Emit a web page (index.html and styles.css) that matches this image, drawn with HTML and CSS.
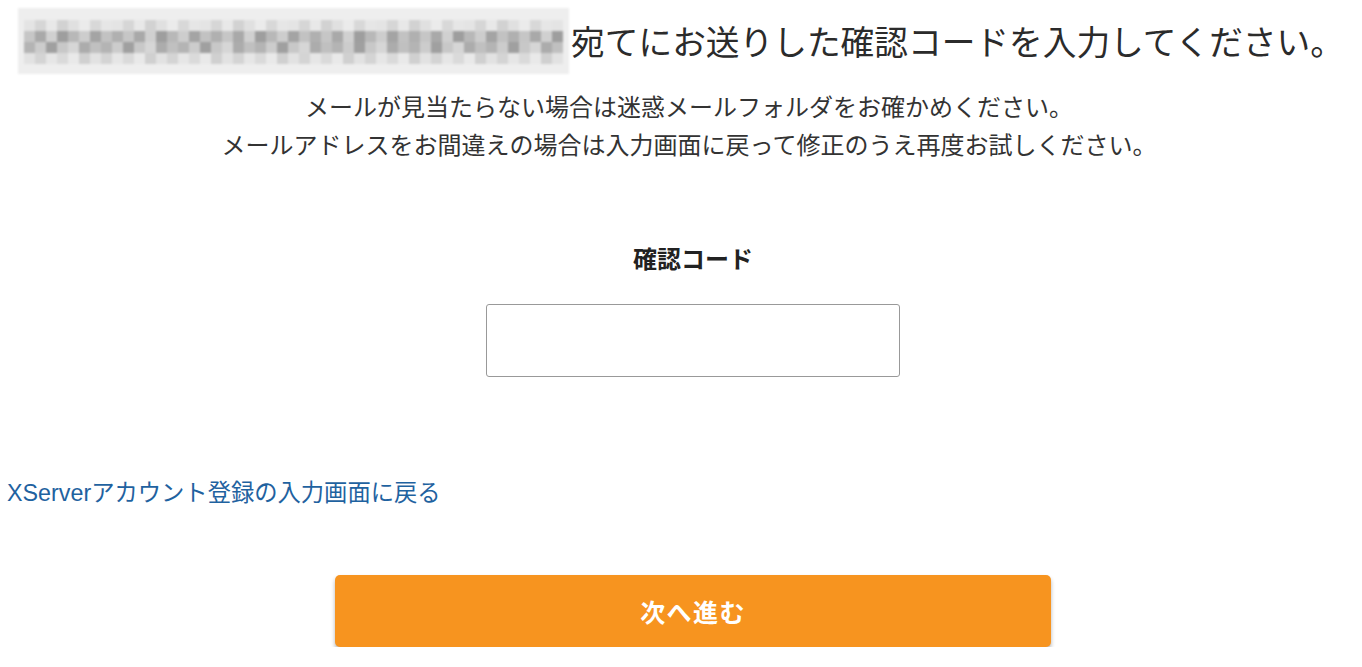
FILE: index.html
```html
<!DOCTYPE html>
<html lang="ja">
<head>
<meta charset="utf-8">
<title>確認コード入力</title>
<link rel="stylesheet" href="styles.css">
</head>
<body>
<main class="page">
  <header class="intro">
    <h1 class="title">
      <span class="email-mask" aria-hidden="true">
        <span class="mosaic-row row-a"></span>
        <span class="mosaic-row row-b"></span>
        <span class="mosaic-row row-c"></span>
        <span class="mosaic-row row-d"></span>
      </span>
      <span class="title-text">宛てにお送りした確認コードを入力してください。</span>
    </h1>
    <p class="note">メールが見当たらない場合は迷惑メールフォルダをお確かめください。<br>メールアドレスをお間違えの場合は入力画面に戻って修正のうえ再度お試しください。</p>
  </header>

  <section class="form">
    <label class="field-label" for="code">確認コード</label>
    <input class="field-input" id="code" type="text">
  </section>

  <nav class="back">
    <a class="back-link" href="#">XServerアカウント登録の入力画面に戻る</a>
  </nav>

  <div class="actions">
    <button class="btn-next" type="button">次へ進む</button>
  </div>
</main>
</body>
</html>
```

FILE: styles.css
```css
html, body {
  margin: 0;
  padding: 0;
  background: #fff;
}

body {
  font-family: "Noto Sans CJK JP", "Noto Sans", sans-serif;
  color: #333;
}

.page {
  display: flex;
  flex-direction: column;
}

.intro {
  padding-top: 8px;
  text-align: center;
}

.title {
  margin: 0;
  display: flex;
  justify-content: center;
  align-items: center;
  font-size: 33.7px;
  font-weight: 400;
  line-height: 1;
  color: #2b2b2b;
}

.email-mask {
  display: flex;
  flex-direction: column;
  box-sizing: border-box;
  width: 551px;
  height: 66px;
  padding: 12px 6px 0;
  background: #eeeeee;
  filter: blur(0.8px);
}

.mosaic-row {
  display: block;
  height: 11px;
}

.row-a {
  background: repeating-linear-gradient(90deg,
    #e4e4e4 0 11px, #d6d6d6 11px 22px, #e8e8e8 22px 33px, #d2d2d2 33px 44px,
    #e0e0e0 44px 55px, #ebebeb 55px 66px, #d8d8d8 66px 77px, #e6e6e6 77px 88px);
}

.row-b {
  background: repeating-linear-gradient(90deg,
    #c6c6c6 0 11px, #a9a9a9 11px 22px, #d0d0d0 22px 33px, #9e9e9e 33px 44px,
    #b8b8b8 44px 55px, #cdcdcd 55px 66px, #a4a4a4 66px 77px, #c2c2c2 77px 88px,
    #b0b0b0 88px 99px);
}

.row-c {
  background: repeating-linear-gradient(90deg,
    #b4b4b4 0 11px, #cccccc 11px 22px, #a0a0a0 22px 33px, #c8c8c8 33px 44px,
    #d6d6d6 44px 55px, #acacac 55px 66px, #c0c0c0 66px 77px);
}

.row-d {
  background: repeating-linear-gradient(90deg,
    #e2e2e2 0 11px, #d4d4d4 11px 22px, #e6e6e6 22px 33px, #dadada 33px 44px,
    #e9e9e9 44px 55px, #d0d0d0 55px 66px);
}

.title-text {
  margin-left: 2px;
}

.note {
  margin: 13px 0 0;
  font-size: 24px;
  line-height: 38px;
  color: #333;
  padding-left: 16px;
}

.form {
  display: flex;
  flex-direction: column;
  align-items: center;
  padding-left: 24px;
  margin-top: 78px;
}

.field-label {
  font-size: 24px;
  font-weight: 700;
  line-height: 34px;
  color: #222;
}

.field-input {
  margin-top: 29px;
  box-sizing: border-box;
  width: 414px;
  height: 73px;
  border: 1px solid #999;
  border-radius: 3px;
  background: #fff;
  font-size: 22px;
  padding: 0 12px;
}

.back {
  margin-top: 99px;
  padding-left: 7px;
}

.back-link {
  font-family: "Liberation Sans", "Noto Sans CJK JP", sans-serif;
  font-size: 23.3px;
  line-height: 34px;
  color: #1f62a0;
  text-decoration: none;
}

.actions {
  display: flex;
  justify-content: center;
  padding-left: 24px;
  margin-top: 65px;
}

.btn-next {
  width: 716px;
  height: 72px;
  border: none;
  border-radius: 5px;
  background: #f7941f;
  color: #fff;
  font-family: "Noto Sans CJK JP", sans-serif;
  font-size: 25px;
  font-weight: 700;
  letter-spacing: 1.4px;
  box-shadow: 0 3px 4px rgba(0, 0, 0, 0.3);
  cursor: pointer;
}
```
